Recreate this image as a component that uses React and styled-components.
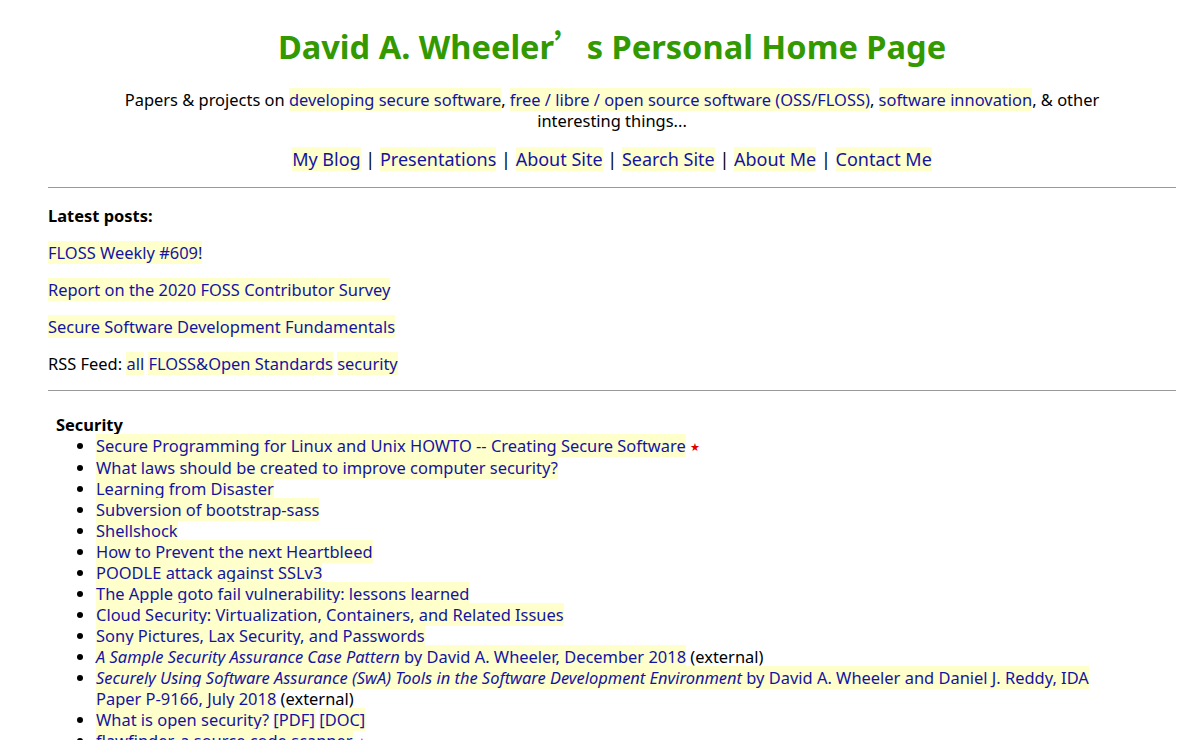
import styled, { createGlobalStyle } from 'styled-components';

const GlobalStyle = createGlobalStyle`
  html, body {
    margin: 0;
    background: #ffffff;
  }
  body {
    padding: 0 24px 0 48px;
    font-family: "Noto Sans", "Open Sans", sans-serif;
    font-size: 16.45px;
    line-height: 21px;
    color: #000000;
  }
`;

const Title = styled.h1`
  margin: 25px 0 22px;
  text-align: center;
  font-size: 32.6px;
  line-height: 40px;
  font-weight: bold;
  color: #339900;
`;

const Quote = styled.span`
  font-family: "Noto Sans CJK SC", sans-serif;
`;

const Intro = styled.p`
  margin: 0 auto;
  max-width: 1000px;
  text-align: center;
`;

const Link = styled.a`
  color: #1414a3;
  background: #ffffcc;
  text-decoration: none;
`;

const NoWrap = styled.span`
  white-space: nowrap;
`;

const Nav = styled.p`
  margin: 15px 0 15px;
  text-align: center;
  font-size: 18px;
  line-height: 26px;
`;

const Rule = styled.hr`
  margin: 0;
  border: none;
  border-top: 1px solid #999999;
  height: 0;
`;

const Posts = styled.section`
  padding: 17px 0 16px;

  > p {
    margin: 0 0 16px;
  }
  > p:last-child {
    margin-bottom: 0;
  }
`;

const Heading = styled.p`
  font-weight: bold;
`;

const Topics = styled.ul`
  list-style: none;
  margin: 23px 0 0;
  padding-left: 8px;
`;

const TopicName = styled.div`
  font-weight: bold;
`;

const Items = styled.ul`
  margin: 0;
  padding-left: 40px;
  list-style: disc;

  > li {
    line-height: 21px;
  }
`;

const Star = styled.span`
  color: #e00000;
  font-size: 11px;
  margin-left: 4px;
  vertical-align: 1px;
`;

const navLinks = ['My Blog', 'Presentations', 'About Site', 'Search Site', 'About Me', 'Contact Me'];

const plainItems = [
  'What laws should be created to improve computer security?',
  'Learning from Disaster',
  'Subversion of bootstrap-sass',
  'Shellshock',
  'How to Prevent the next Heartbleed',
  'POODLE attack against SSLv3',
  'The Apple goto fail vulnerability: lessons learned',
  'Cloud Security: Virtualization, Containers, and Related Issues',
  'Sony Pictures, Lax Security, and Passwords',
];

export default function App() {
  return (
    <>
      <GlobalStyle />
      <Title>
        David A. Wheeler<Quote>’</Quote>s Personal Home Page
      </Title>
      <Intro>
        Papers &amp; projects on <Link href="#">developing secure software</Link>,{' '}
        <Link href="#">free / libre / open source software (OSS/FLOSS)</Link>,{' '}
        <Link href="#">software innovation</Link>, &amp; other interesting things...
      </Intro>
      <Nav>
        {navLinks.map((n, i) => (
          <span key={n}>
            {i > 0 && ' | '}
            <Link href="#">{n}</Link>
          </span>
        ))}
      </Nav>
      <Rule />
      <Posts>
        <Heading>Latest posts:</Heading>
        <p>
          <Link href="#">FLOSS Weekly #609!</Link>
        </p>
        <p>
          <Link href="#">Report on the 2020 FOSS Contributor Survey</Link>
        </p>
        <p>
          <Link href="#">Secure Software Development Fundamentals</Link>
        </p>
        <p>
          RSS Feed: <Link href="#">all</Link> <Link href="#">FLOSS&amp;Open Standards</Link>{' '}
          <Link href="#">security</Link>
        </p>
      </Posts>
      <Rule />
      <Topics>
        <li>
          <TopicName>Security</TopicName>
          <Items>
            <li>
              <Link href="#">Secure Programming for Linux and Unix HOWTO -- Creating Secure Software</Link>
              <Star>★</Star>
            </li>
            {plainItems.map((t) => (
              <li key={t}>
                <Link href="#">{t}</Link>
              </li>
            ))}
            <li>
              <Link href="#">
                <i>A Sample Security Assurance Case Pattern</i> by David A. Wheeler, December 2018
              </Link>{' '}
              (external)
            </li>
            <li>
              <Link href="#">
                <i>Securely Using Software Assurance (SwA) Tools in the Software Development Environment</i> by
                David A. Wheeler and Daniel J. Reddy, IDA <NoWrap>Paper P-9166</NoWrap>, July 2018
              </Link>{' '}
              (external)
            </li>
            <li>
              <Link href="#">What is open security?</Link> <Link href="#">[PDF]</Link>{' '}
              <Link href="#">[DOC]</Link>
            </li>
            <li>
              <Link href="#">flawfinder, a source code scanner</Link>
              <Star>★</Star>
            </li>
          </Items>
        </li>
      </Topics>
    </>
  );
}
